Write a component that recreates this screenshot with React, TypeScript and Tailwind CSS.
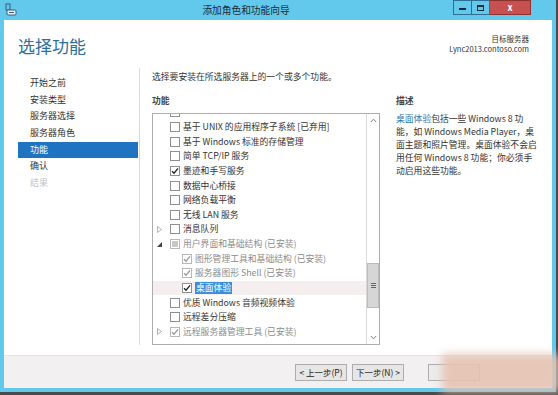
import React from 'react';

const FONT = { fontFamily: '"Noto Sans CJK SC", "Noto Sans", sans-serif' };

type Row = {
  text: string;
  level: 1 | 2;
  state: 'off' | 'on' | 'partial';
  gray?: boolean;
  expander?: 'open' | 'closed';
  selected?: boolean;
};

const ROWS: Row[] = [
  { text: '', level: 1, state: 'off' },
  { text: '基于 UNIX 的应用程序子系统 [已弃用]', level: 1, state: 'off' },
  { text: '基于 Windows 标准的存储管理', level: 1, state: 'off' },
  { text: '简单 TCP/IP 服务', level: 1, state: 'off' },
  { text: '墨迹和手写服务', level: 1, state: 'on' },
  { text: '数据中心桥接', level: 1, state: 'off' },
  { text: '网络负载平衡', level: 1, state: 'off' },
  { text: '无线 LAN 服务', level: 1, state: 'off' },
  { text: '消息队列', level: 1, state: 'off', expander: 'closed' },
  { text: '用户界面和基础结构 (已安装)', level: 1, state: 'partial', gray: true, expander: 'open' },
  { text: '图形管理工具和基础结构 (已安装)', level: 2, state: 'on', gray: true },
  { text: '服务器图形 Shell (已安装)', level: 2, state: 'on', gray: true },
  { text: '桌面体验', level: 2, state: 'on', selected: true },
  { text: '优质 Windows 音频视频体验', level: 1, state: 'off' },
  { text: '远程差分压缩', level: 1, state: 'off' },
  { text: '远程服务器管理工具 (已安装)', level: 1, state: 'on', gray: true, expander: 'closed' },
];

const NAV = ['开始之前', '安装类型', '服务器选择', '服务器角色', '功能', '确认', '结果'];

function Check({ state, gray }: { state: Row['state']; gray?: boolean }) {
  const border = gray ? 'border-[#b8b8b8]' : 'border-[#8e8f8f]';
  return (
    <div className={`w-[10px] h-[10px] border ${border} bg-white flex items-center justify-center shrink-0`}>
      {state === 'on' && (
        <svg width="8" height="8" viewBox="0 0 8 8">
          <path d="M1 4.2 L3 6.2 L7 1.3" fill="none" stroke={gray ? '#9a9a9a' : '#222'} strokeWidth="1.3" />
        </svg>
      )}
      {state === 'partial' && <div className="w-[6px] h-[6px] bg-[#c8c8c8]" />}
    </div>
  );
}

function Expander({ kind }: { kind?: 'open' | 'closed' }) {
  if (!kind) return <div className="w-[8px]" />;
  return (
    <div className="w-[8px] flex items-center justify-center">
      {kind === 'closed' ? (
        <svg width="5" height="7" viewBox="0 0 5 7">
          <path d="M0.5 0.5 L4.5 3.5 L0.5 6.5 Z" fill="none" stroke="#a8a8a8" strokeWidth="0.9" />
        </svg>
      ) : (
        <svg width="5" height="5" viewBox="0 0 5 5">
          <path d="M5 0 L5 5 L0 5 Z" fill="#444" />
        </svg>
      )}
    </div>
  );
}

export default function App() {
  return (
    <div className="w-[558px] h-[395px] bg-[#4a4a4a] overflow-hidden text-[9px] text-[#333]" style={FONT}>
      <div className="w-[556px] h-[392px] bg-[#62c8ec] flex flex-col px-[4px] pb-[4px]">
        {/* Title bar */}
        <div className="h-[20px] flex items-start relative shrink-0">
          <div className="pt-[3px] pl-[1px]">
            <svg width="12" height="13" viewBox="0 0 12 13">
              <rect x="1" y="1" width="4" height="6" fill="none" stroke="#3b5e7a" strokeWidth="1" />
              <rect x="2" y="7" width="9" height="5" rx="1" fill="#e6f2fa" stroke="#3b5e7a" strokeWidth="1" />
              <line x1="4" y1="9.5" x2="9" y2="9.5" stroke="#3b5e7a" strokeWidth="1" />
            </svg>
          </div>
          <div className="flex-1 text-center text-[9.7px] leading-[20px] text-[#1e2a33] pl-[22px]">添加角色和功能向导</div>
          <div className="flex h-[15px] mr-[21px]">
            <div className="w-[19px] h-[15px] border border-[#2c6f92] bg-[#62c8ec] flex items-end justify-center pb-[4px]">
              <div className="w-[7px] h-[2px] bg-[#1b2a35]" />
            </div>
            <div className="w-[18px] h-[15px] border-y border-r border-[#2c6f92] bg-[#62c8ec] flex items-center justify-center">
              <div className="w-[7px] h-[6px] border-[1.5px] border-t-[2.5px] border-[#1b2a35]" />
            </div>
            <div className="w-[41px] h-[15px] bg-[#c75050] border-y border-r border-[#8f3131] flex items-center justify-center text-white text-[9px] font-bold leading-none">
              x
            </div>
          </div>
        </div>

        {/* Client area */}
        <div className="flex-1 flex flex-col bg-white">
          {/* Header */}
          <div className="h-[48px] flex justify-between shrink-0">
            <div className="pl-[14px] pt-[15px] text-[17px] leading-[22px] text-[#2a6f9a]">选择功能</div>
            <div className="pr-[23px] pt-[14px] text-right text-[7.5px] leading-[10px] text-[#333]">
              <div>目标服务器</div>
              <div>Lync2013.contoso.com</div>
            </div>
          </div>

          {/* Body */}
          <div className="flex-1 flex pb-[10px]">
            {/* Left nav */}
            <div className="w-[136px] border-r border-[#d9d9d9] pl-[14px] pr-[1px] pt-[7px] shrink-0">
              {NAV.map((n, i) => (
                <div
                  key={n}
                  className={`h-[16.7px] leading-[16.7px] pl-[12px] ${
                    i === 4 ? 'bg-[#1f73c0] text-white' : i === 6 ? 'text-[#c4c4c4]' : 'text-[#333]'
                  }`}
                >
                  {n}
                </div>
              ))}
            </div>

            {/* Middle */}
            <div className="w-[241px] pl-[12px] pt-[1px] flex flex-col shrink-0">
              <div className="leading-[16px] text-[8.8px]">选择要安装在所选服务器上的一个或多个功能。</div>
              <div className="mt-[8px] leading-[16px] text-[8.8px] font-bold text-[#444]">功能</div>
              <div className="mt-[4px] w-[228px] flex-1 border border-[#abadb3] flex overflow-hidden">
                <div className="flex-1 overflow-hidden">
                  <div className="mt-[-9px]">
                    {ROWS.map((r, i) => (
                      <div
                        key={i}
                        className={`h-[14.65px] flex items-center ${r.selected ? 'bg-[#f4eeee]' : ''}`}
                      >
                        <div className={`flex items-center ${r.level === 2 ? 'pl-[29px]' : 'pl-[2px]'}`}>
                          {r.level === 1 && <Expander kind={r.expander} />}
                          {r.level === 1 && <div className="w-[7px]" />}
                          <Check state={r.state} gray={r.gray} />
                        </div>
                        <div
                          className={`ml-[3px] whitespace-nowrap text-[8.8px] leading-[12px] ${
                            r.selected
                              ? 'bg-[#3b8fd9] text-white px-[1px]'
                              : r.gray
                              ? 'text-[#8c8c8c]'
                              : 'text-[#333]'
                          }`}
                        >
                          {r.text}
                        </div>
                      </div>
                    ))}
                  </div>
                </div>
                {/* Scrollbar */}
                <div className="w-[13px] border-l border-[#d9d9d9] flex flex-col items-stretch shrink-0">
                  <div className="h-[13px] flex items-center justify-center">
                    <svg width="7" height="5" viewBox="0 0 7 5">
                      <path d="M0.8 4 L3.5 1.2 L6.2 4" fill="none" stroke="#777" strokeWidth="1" />
                    </svg>
                  </div>
                  <div className="h-[136px]" />
                  <div className="h-[45px] bg-[#d6d6d6] border border-[#bcbcbc] flex items-center justify-center">
                    <div className="flex flex-col gap-[1px]">
                      <div className="w-[5px] h-[1px] bg-[#666]" />
                      <div className="w-[5px] h-[1px] bg-[#666]" />
                      <div className="w-[5px] h-[1px] bg-[#666]" />
                    </div>
                  </div>
                  <div className="flex-1" />
                  <div className="h-[13px] flex items-center justify-center">
                    <svg width="7" height="5" viewBox="0 0 7 5">
                      <path d="M0.8 1 L3.5 3.8 L6.2 1" fill="none" stroke="#777" strokeWidth="1" />
                    </svg>
                  </div>
                </div>
              </div>
            </div>

            {/* Description */}
            <div className="pl-[15px] pt-[25px] text-[8.8px]">
              <div className="font-bold text-[#444] leading-[16px]">描述</div>
              <div className="mt-[3px] leading-[13px] whitespace-nowrap">
                <div>
                  <span className="text-[#2a78b0]">桌面体验</span>包括一些 Windows 8 功
                </div>
                <div>能，如 Windows Media Player，桌</div>
                <div>面主题和照片管理。桌面体验不会启</div>
                <div>用任何 Windows 8 功能；你必须手</div>
                <div>动启用这些功能。</div>
              </div>
            </div>
          </div>

          {/* Footer */}
          <div className="h-[33px] bg-[#f2f0f0] border-t border-[#e2e2e2] flex items-center pl-[291px] relative shrink-0">
            <div className="w-[52px] h-[17px] border border-[#adadad] bg-[#e6e6e6] text-[8.5px] leading-[15px] text-center text-[#222] whitespace-nowrap">
              &lt; 上一步(P)
            </div>
            <div className="ml-[5px] w-[52px] h-[17px] border border-[#adadad] bg-[#e6e6e6] text-[8.5px] leading-[15px] text-center text-[#222] whitespace-nowrap">
              下一步(N) &gt;
            </div>
            <div className="ml-[24px] w-[52px] h-[17px] border border-[#adadad] bg-[#ececec]" />
            <div className="absolute right-[-8px] top-[-2px] w-[118px] h-[38px] bg-[#e6c3b2] blur-[4px] opacity-90" />
          </div>
        </div>
      </div>
    </div>
  );
}
